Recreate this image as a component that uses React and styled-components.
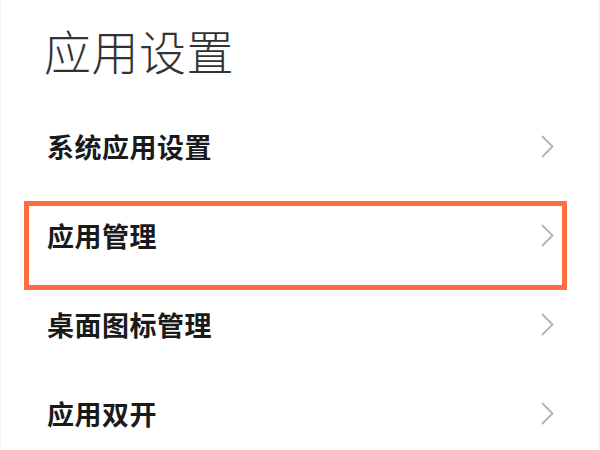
import React from 'react';
import styled, { createGlobalStyle } from 'styled-components';

const GlobalStyle = createGlobalStyle`
  html, body {
    margin: 0;
    padding: 0;
    background: #ffffff;
  }
  body {
    font-family: 'Noto Sans CJK SC', 'Noto Sans', sans-serif;
  }
`;

const items = ['系统应用设置', '应用管理', '桌面图标管理', '应用双开'];

const Page = styled.div`
  width: 600px;
  height: 450px;
  box-sizing: border-box;
  overflow: hidden;
  border-left: 1px solid #f3f3f3;
  border-right: 1px solid #f1f1f1;
`;

const Header = styled.div`
  height: 102px;
  display: flex;
  align-items: center;
  padding-left: 43px;
  box-sizing: border-box;
`;

const Title = styled.h1`
  margin: 0;
  font-size: 47px;
  line-height: 1;
  font-weight: 300;
  color: #333333;
  letter-spacing: 0.5px;
  margin-top: -4px;
`;

const List = styled.div`
  display: flex;
  flex-direction: column;
`;

const Row = styled.div`
  position: relative;
  height: 89px;
  display: flex;
  align-items: center;
  justify-content: space-between;
  padding: 0 45px 0 46px;
  box-sizing: border-box;
`;

const Label = styled.span`
  font-size: 27px;
  line-height: 1;
  font-weight: 700;
  color: #1a1a1a;
  letter-spacing: 0.5px;
`;

const Highlight = styled.div`
  position: absolute;
  top: 10px;
  left: 23px;
  right: 32px;
  height: 89px;
  border: 5px solid #ff6d3f;
  box-sizing: border-box;
  pointer-events: none;
`;

const Chevron = () => (
  <svg width="13" height="23" viewBox="0 0 13 23" fill="none">
    <polyline
      points="1.5,1.5 11.5,11.5 1.5,21.5"
      stroke="#b4b4b4"
      strokeWidth="1.8"
      strokeLinecap="round"
      strokeLinejoin="round"
    />
  </svg>
);

const App = () => (
  <>
    <GlobalStyle />
    <Page>
      <Header>
        <Title>应用设置</Title>
      </Header>
      <List>
        {items.map((name, i) => (
          <Row key={name}>
            <Label>{name}</Label>
            <Chevron />
            {i === 1 && <Highlight />}
          </Row>
        ))}
      </List>
    </Page>
  </>
);

export default App;
